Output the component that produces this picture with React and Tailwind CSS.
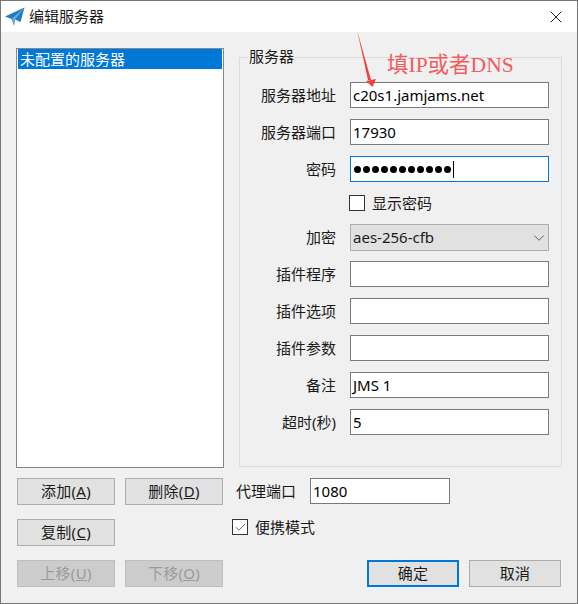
import { X, ChevronDown, Check } from "lucide-react";

const FONT = "font-['Noto_Sans','Noto_Sans_CJK_SC',sans-serif]";

function Field({ label, value, focused }) {
    return (
        <div className="flex items-center h-[26px]">
            <label className="w-[96px] text-right text-[#1a1a1a]">{label}</label>
            <div className={`ml-[14px] w-[199px] h-[26px] bg-white border flex items-center px-[2px] ${focused ? "border-[#0078d7]" : "border-[#7a7a7a]"}`}>
                {value}
            </div>
        </div>
    );
}

function WinButton({ children, disabled, primary, className = "" }) {
    let look = "bg-[#e1e1e1] border border-[#adadad] text-[#1a1a1a]";
    if (disabled) look = "bg-[#cccccc] border border-[#bfbfbf] text-[#9a9a9a]";
    if (primary) look = "bg-[#e1e1e1] border-2 border-[#0078d7] text-[#1a1a1a]";
    return (
        <button className={`h-[27px] flex items-center justify-center tracking-[0.3px] ${look} ${className}`}>
            {children}
        </button>
    );
}

function PasswordDots() {
    return (
        <div className="flex items-center gap-[2px] pl-[1px]">
            {Array.from({ length: 11 }).map((_, i) => (
                <span key={i} className="w-[7px] h-[7px] rounded-full bg-black" />
            ))}
            <span className="w-[1px] h-[17px] bg-black" />
        </div>
    );
}

export default function App() {
    return (
        <div className={`relative w-[578px] h-[604px] overflow-hidden bg-[#f0f0f0] border border-[#777777] text-[15px] leading-none ${FONT}`}>
            {/* Title bar */}
            <div className="h-[31px] bg-white flex items-center pl-[4px] pr-[11px]">
                <svg width="20" height="20" viewBox="0 0 20 20">
                    <path d="M0 9.5 L19.5 0.5 L15.5 15 L10 12.5 L9 18.5 L6.5 12 Z" fill="#1f7cc2" />
                    <path d="M6.5 12 L19.5 0.5 L10 12.5 L9 18.5 Z" fill="#6aa9da" />
                </svg>
                <span className="ml-[4px] text-[#1a1a1a]">编辑服务器</span>
                <X className="ml-auto w-[20px] h-[20px] text-[#222222]" strokeWidth={1.2} />
            </div>

            {/* Main row */}
            <div className="flex pl-[15px] pt-[16px]">
                <div className="w-[208px] h-[420px] bg-white border border-[#828790] px-[1px]">
                    <div className="h-[20px] bg-[#0078d7] text-white flex items-center pl-[2px]">未配置的服务器</div>
                </div>

                <fieldset className="relative ml-[15px] mt-[9px] w-[323px] h-[410px] border border-[#dcdcdc] pt-[24px]">
                    <legend className="absolute left-[8px] top-[-9px] px-[1px] bg-[#f0f0f0] text-[#1a1a1a]">服务器</legend>
                    <div className="flex flex-col gap-[11px]">
                        <Field label="服务器地址" value="c20s1.jamjams.net" />
                        <Field label="服务器端口" value="17930" />
                        <Field label="密码" value={<PasswordDots />} focused />
                        <div className="h-[20px] flex items-center pl-[109px]">
                            <span className="w-[16px] h-[16px] bg-white border border-[#333333]" />
                            <span className="ml-[7px] text-[#1a1a1a]">显示密码</span>
                        </div>
                        <div className="flex items-center h-[27px] mb-[-1px]">
                            <label className="w-[96px] text-right text-[#1a1a1a]">加密</label>
                            <div className="ml-[14px] w-[199px] h-[27px] bg-[#e1e1e1] border border-[#adadad] flex items-center justify-between pl-[2px] text-[#1a1a1a]">
                                aes-256-cfb
                                <ChevronDown className="w-[18px] h-[18px] text-[#555555]" strokeWidth={1.2} />
                            </div>
                        </div>
                        <Field label="插件程序" value="" />
                        <Field label="插件选项" value="" />
                        <Field label="插件参数" value="" />
                        <Field label="备注" value="JMS 1" />
                        <Field label="超时(秒)" value="5" />
                    </div>
                </fieldset>
            </div>

            {/* Bottom controls */}
            <div className="flex pl-[16px] pt-[10px]">
                <div className="grid grid-cols-[98px_98px] gap-x-[10px] gap-y-[14px]">
                    <WinButton>添加(<u>A</u>)</WinButton>
                    <WinButton>删除(<u>D</u>)</WinButton>
                    <WinButton>复制(<u>C</u>)</WinButton>
                    <div />
                    <WinButton disabled>上移(<u>U</u>)</WinButton>
                    <WinButton disabled>下移(<u>O</u>)</WinButton>
                </div>
                <div className="ml-[9px] flex-1 flex flex-col">
                    <div className="flex items-center h-[27px]">
                        <span className="ml-[4px] text-[#1a1a1a]">代理端口</span>
                        <div className="ml-[14px] w-[140px] h-[26px] mb-[1px] bg-white border border-[#7a7a7a] flex items-center px-[2px]">1080</div>
                    </div>
                    <div className="flex items-center h-[16px] mt-[14px]">
                        <span className="w-[16px] h-[16px] bg-white border border-[#333333] flex items-center justify-center">
                            <Check className="w-[13px] h-[13px] text-[#333333]" strokeWidth={1.4} />
                        </span>
                        <span className="ml-[7px] text-[#1a1a1a]">便携模式</span>
                    </div>
                    <div className="flex mt-[25px] ml-[135px] gap-[10px]">
                        <WinButton primary className="w-[92px]">确定</WinButton>
                        <WinButton className="w-[92px]">取消</WinButton>
                    </div>
                </div>
            </div>

            {/* Red annotation drawn over the screenshot */}
            <svg className="absolute left-[349px] top-[29px]" width="30" height="60" viewBox="0 0 30 60">
                <path d="M7 0 L21 50 L18 50 Z" fill="#f04040" />
                <path d="M16 51 L26 49 L22.5 57 Z" fill="#f04040" />
            </svg>
            <span className="absolute left-[386px] top-[54px] text-[21.5px] text-[#f25c5c] font-['Liberation_Serif','Noto_Sans_CJK_SC',serif]">填IP或者DNS</span>
        </div>
    );
}
